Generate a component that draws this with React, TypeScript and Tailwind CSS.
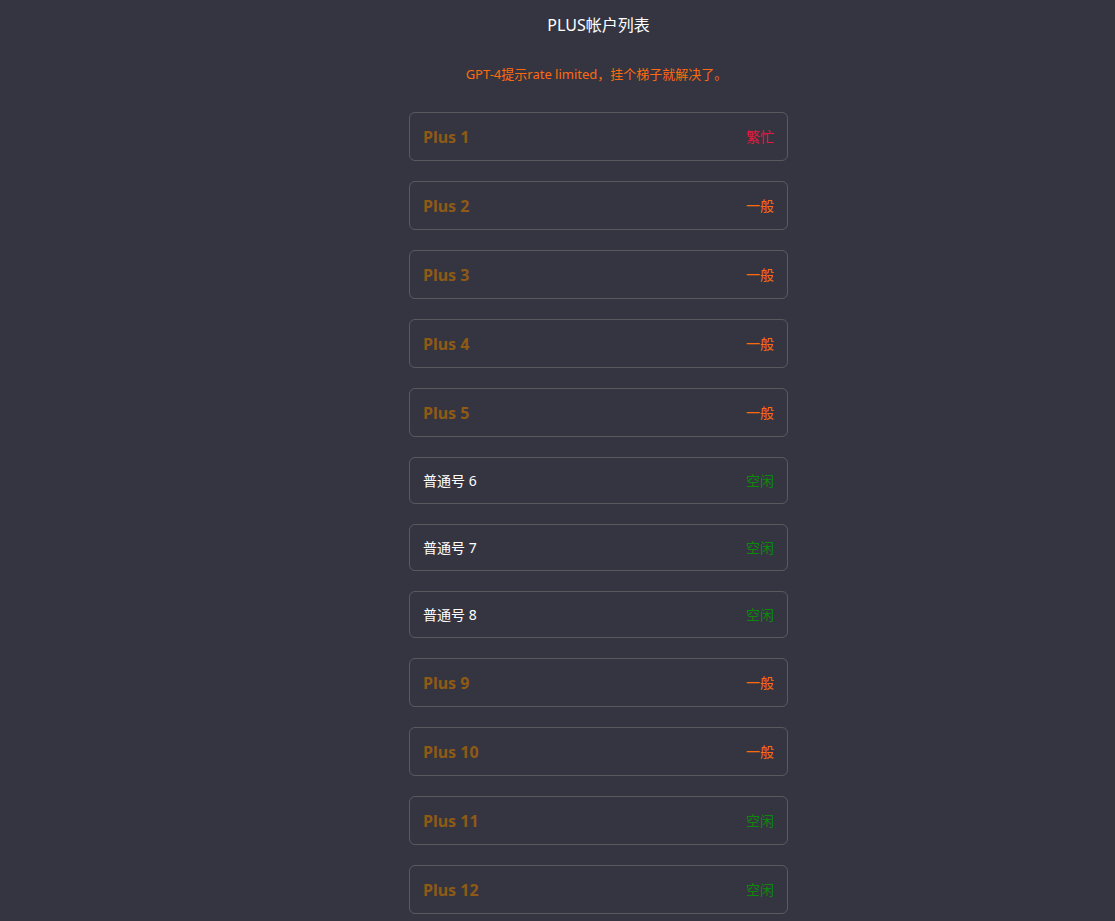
type Account = {
  name: string;
  plus: boolean;
  status: "繁忙" | "一般" | "空闲";
};

const accounts: Account[] = [
  { name: "Plus 1", plus: true, status: "繁忙" },
  { name: "Plus 2", plus: true, status: "一般" },
  { name: "Plus 3", plus: true, status: "一般" },
  { name: "Plus 4", plus: true, status: "一般" },
  { name: "Plus 5", plus: true, status: "一般" },
  { name: "普通号 6", plus: false, status: "空闲" },
  { name: "普通号 7", plus: false, status: "空闲" },
  { name: "普通号 8", plus: false, status: "空闲" },
  { name: "Plus 9", plus: true, status: "一般" },
  { name: "Plus 10", plus: true, status: "一般" },
  { name: "Plus 11", plus: true, status: "空闲" },
  { name: "Plus 12", plus: true, status: "空闲" },
];

const statusColor: Record<Account["status"], string> = {
  繁忙: "text-[#e8173c]",
  一般: "text-[#ff6a0e]",
  空闲: "text-[#0a8a0a]",
};

function AccountRow({ account }: { account: Account }) {
  return (
    <div
      className={
        "flex items-center justify-between rounded-md border border-[#5a5a5e] pl-[13px] pr-[12px] " +
        (account.plus ? "h-[49px] mb-[20px]" : "h-[47px] mb-[20px]")
      }
    >
      {account.plus ? (
        <span className="text-[16px] font-bold text-[#8f5a14]">{account.name}</span>
      ) : (
        <span className="text-[14px] text-white">{account.name}</span>
      )}
      <span className={"text-[14px] pr-[1px] " + statusColor[account.status]}>{account.status}</span>
    </div>
  );
}

export default function App() {
  return (
    <div
      className="min-h-screen bg-[#353541]"
      style={{ fontFamily: '"Noto Sans", "Noto Sans CJK SC", sans-serif' }}
    >
      <div className="ml-[409px] w-[379px] pt-[13px]">
        <h1 className="text-center text-[16px] leading-[24px] text-white">PLUS帐户列表</h1>
        <p className="mt-[27px] text-center text-[13px] leading-[20px] text-[#ff6a0e] pr-[4px]">
          GPT-4提示rate limited，挂个梯子就解决了。
        </p>
        <div className="mt-[28px]">
          {accounts.map((a) => (
            <AccountRow key={a.name} account={a} />
          ))}
        </div>
      </div>
    </div>
  );
}
